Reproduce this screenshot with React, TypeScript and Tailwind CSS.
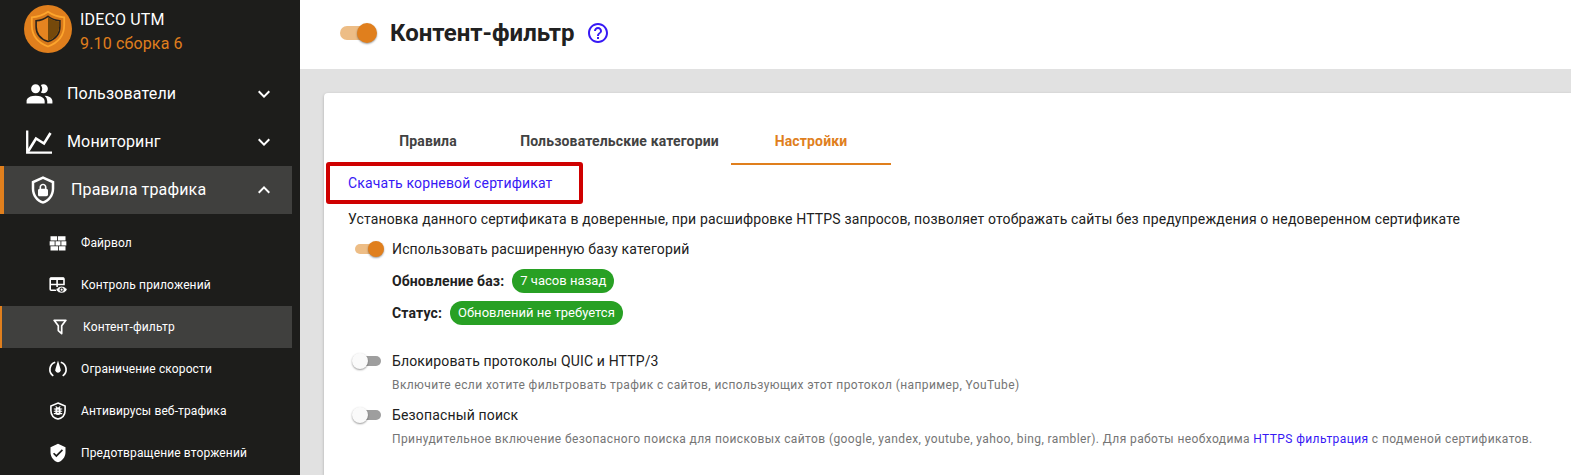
import React from "react";
import { MdVerifiedUser, MdHelpOutline, MdExpandMore, MdExpandLess } from "react-icons/md";

const People = () => (
  <svg viewBox="0 0 24 24" className="-ml-px h-[31px] w-[31px] shrink-0" fill="currentColor">
    <path d="M16 17V19H2V17S2 13 9 13 16 17 16 17M12.5 7.5A3.5 3.5 0 1 0 9 11A3.5 3.5 0 0 0 12.5 7.5M15.94 13A5.32 5.32 0 0 1 18 17V19H22V17S22 13.37 15.94 13M15 4A3.39 3.39 0 0 0 13.07 4.59A5 5 0 0 1 13.07 10.41A3.39 3.39 0 0 0 15 11A3.5 3.5 0 0 0 15 4Z" />
  </svg>
);

const ShieldLock = () => (
  <svg viewBox="0 0 24 24" className="h-[30px] w-[30px]" fill="currentColor">
    <path d="M21,11C21,16.55 17.16,21.74 12,23C6.84,21.74 3,16.55 3,11V5L12,1L21,5V11M12,21C15.75,20 19,15.54 19,11.22V6.3L12,3.18L5,6.3V11.22C5,15.54 8.25,20 12,21M14.8,11V9.5C14.8,8.1 13.4,7 12,7C10.6,7 9.2,8.1 9.2,9.5V11C8.6,11 8,11.6 8,12.2V15.7C8,16.4 8.6,17 9.2,17H14.7C15.4,17 16,16.4 16,15.8V12.3C16,11.6 15.4,11 14.8,11M13.5,11H10.5V9.5C10.5,8.7 11.2,8.2 12,8.2C12.8,8.2 13.5,8.7 13.5,9.5V11Z" />
  </svg>
);

const Chart = () => (
  <svg viewBox="0 0 26 24" className="ml-px h-6 w-[26px]" fill="none" stroke="currentColor" strokeWidth="2.3">
    <path d="M1.2 0.5V22.6H26" />
    <path d="M2 21.5L10 8.5L18 13.5L24.5 3" strokeWidth="2.6" />
  </svg>
);

const Wall = () => (
  <svg viewBox="0 0 24 24" className="h-5 w-5" fill="currentColor">
    <path d="M3,16H12V21H3V16M2,10H8V15H2V10M9,10H15V15H9V10M16,10H22V15H16V10M13,16H21V21H13V16M3,4H11V9H3V4M12,4H21V9H12V4Z" />
  </svg>
);

const TableEye = () => (
  <svg viewBox="0 0 20 20" className="h-5 w-5">
    <path d="M8.5 15.2H3.2a1 1 0 0 1-1-1V4a1 1 0 0 1 1-1H15a1 1 0 0 1 1 1V10.3M2.2 9.5H16M9.1 4V12" fill="none" stroke="currentColor" strokeWidth="1.6" />
    <path d="M2.2 2.6H16V5H2.2z" fill="currentColor" />
    <path d="M8 14.7C10.5 10 16.7 10 19.2 14.7C16.7 19.2 10.5 19.2 8 14.7Z" fill="currentColor" stroke="#1d1d1b" strokeWidth=".7" />
    <circle cx="13.6" cy="14.7" r="2.1" fill="#1d1d1b" />
    <circle cx="13.6" cy="14.7" r="1.1" fill="currentColor" />
  </svg>
);

const Funnel = () => (
  <svg viewBox="0 0 20 20" className="h-5 w-5" fill="none" stroke="currentColor" strokeWidth="1.7" strokeLinejoin="round">
    <path d="M4.1 3.3H15.9L11.7 8.7V16.6L8.3 13.6V8.7Z" />
  </svg>
);

const Gauge = () => (
  <svg viewBox="0 0 20 20" className="h-5 w-5" fill="none" stroke="currentColor" strokeWidth="1.7">
    <path d="M5.3 16.9A7.7 7.7 0 0 1 7.2 3.2M14.7 16.9A7.7 7.7 0 0 0 12.8 3.2" />
    <path d="M10 1.4L12.4 9.4A2.8 2.8 0 1 1 7.6 9.4Z" fill="currentColor" stroke="none" />
  </svg>
);

const ShieldBug = () => (
  <svg viewBox="0 0 20 20" className="h-5 w-5" fill="none" stroke="currentColor">
    <path d="M10 2L17.1 5V9.4C17.1 13.4 14.2 16.9 10 18.1C5.8 16.9 2.9 13.4 2.9 9.4V5Z" strokeWidth="1.6" />
    <rect x="7.4" y="6.3" width="5.2" height="7.8" rx="2.5" fill="currentColor" stroke="none" />
    <path d="M5.8 8H14.2M5.8 10.3H14.2M5.8 12.6H14.2M7.7 5.3L9 6.8M12.3 5.3L11 6.8" strokeWidth="1.1" />
    <path d="M9.2 9.1h1.6M9.2 11.4h1.6" stroke="#1d1d1b" strokeWidth=".8" />
  </svg>
);

const Logo = () => (
  <svg viewBox="0 0 48 48" className="h-12 w-12 shrink-0">
    <circle cx="24" cy="24" r="24" fill="#e07f1d" />
    <path d="M24 6.8C28.5 10 34 12 40.2 12.3V20C40.2 30.5 34.5 37.5 24 41.5C13.5 37.5 7.8 30.5 7.8 20V12.3C14 12 19.5 10 24 6.8Z" fill="#d6781b" stroke="#fda52c" strokeWidth="1.8" />
    <path d="M24 11.3C27.7 14 31.5 15.4 35.9 15.8V21.5C35.9 29 32 34 24 36.5C16 34 12.1 29 12.1 21.5V15.8C16.5 15.4 20.3 14 24 11.3Z" fill="#e58420" stroke="#28231c" strokeWidth="1.6" />
    <path d="M24 12.3C27.5 14.7 31 16 35.1 16.5V21.5C35.1 28.5 31.4 33.3 24 35.7Z" fill="#75490b" />
  </svg>
);

const main = [
  { icon: <People />, label: "Пользователи" },
  { icon: <Chart />, label: "Мониторинг" },
];

const subs = [
  { icon: <Wall />, label: "Файрвол" },
  { icon: <TableEye />, label: "Контроль приложений" },
  { icon: <Funnel />, label: "Контент-фильтр", active: true },
  { icon: <Gauge />, label: "Ограничение скорости" },
  { icon: <ShieldBug />, label: "Антивирусы веб-трафика" },
  { icon: <MdVerifiedUser className="h-5 w-5" />, label: "Предотвращение вторжений" },
];

function Toggle({ on }: { on?: boolean }) {
  return (
    <span className={"flex h-5 shrink-0 items-center " + (on ? "ml-[7px] mr-[9px] w-7" : "ml-2 mr-[11px] w-[25px]")}>
      <span className={"flex h-[10px] w-full items-center rounded-full " + (on ? "justify-end bg-[#edbd86]" : "bg-[#9e9e9e]")}>
        <span className={"h-4 w-4 shrink-0 rounded-full shadow-[0_1px_2px_rgba(0,0,0,0.4)] " + (on ? "-mr-px bg-[#e07f1d]" : "-ml-1 bg-[#fafafa]")} />
      </span>
    </span>
  );
}

export default function App() {
  return (
    <div className="flex h-[475px] w-[1571px] overflow-hidden bg-[#e1e1e1] font-[Roboto,sans-serif] text-[#212121]">
      <aside className="flex w-[300px] shrink-0 flex-col bg-[#1d1d1b] text-white">
        <div className="flex h-[69px] gap-2 pl-6 pt-[5px] text-base leading-6 tracking-[0.15px]">
          <Logo />
          <div className="pt-[3px]">
            <div>IDECO UTM</div>
            <div className="text-[#e07f1d]">9.10 сборка 6</div>
          </div>
        </div>
        <nav className="w-[292px]">
          {main.map((m) => (
            <div key={m.label} className="flex h-12 translate-y-px items-center pl-6 pr-4">
              <span className="flex w-[43px] items-center pl-px">{m.icon}</span>
              <span className="flex-1 text-base tracking-[0.15px]">{m.label}</span>
              <MdExpandMore className="h-6 w-6" />
            </div>
          ))}
          <div className="mt-px flex h-12 items-center border-l-4 border-[#e07f1d] bg-[#40403e] pl-6 pr-4">
            <span className="flex w-[43px] items-center">
              <ShieldLock />
            </span>
            <span className="flex-1 text-base tracking-[0.15px]">Правила трафика</span>
            <MdExpandLess className="h-6 w-6" />
          </div>
          <div className="pt-2">
            {subs.map((s) => (
              <div
                key={s.label}
                className={
                  "flex h-[42px] items-center gap-[13px] pl-12 text-xs tracking-[0.12px] " +
                  (s.active ? "border-l-2 border-[#e07f1d] bg-[#40403e]" : "")
                }
              >
                {s.icon}
                <span className="whitespace-nowrap">{s.label}</span>
              </div>
            ))}
          </div>
        </nav>
      </aside>

      <main className="flex min-w-0 flex-1 flex-col">
        <header className="flex h-[69px] shrink-0 items-center bg-white pb-[3px] pl-10">
          <span className="flex h-[14px] w-9 items-center justify-end rounded-full bg-[#edbd86]">
            <span className="-mr-px h-5 w-5 rounded-full bg-[#e07f1d] shadow-[0_1px_2px_rgba(0,0,0,0.4)]" />
          </span>
          <h1 className="ml-[14px] text-2xl font-bold">Контент-фильтр</h1>
          <MdHelpOutline className="ml-3 h-6 w-6 text-[#3719f5]" />
        </header>

        <section className="ml-6 mt-6 flex-1 whitespace-nowrap rounded-tl bg-white pl-6 pt-6 shadow-[0_1px_3px_rgba(0,0,0,0.25)]">
          <div className="flex h-12 text-sm font-bold leading-[48px] tracking-[0.15px] text-[#424242]">
            <div className="w-40 text-center">Правила</div>
            <div className="w-[223px] text-center">Пользовательские категории</div>
            <div className="w-40 border-b-2 border-[#e07f1d] text-center text-[#e07f1d]">Настройки</div>
          </div>
          <div className="relative flex h-9 items-center text-sm tracking-[0.15px] text-[#3719f5]">
            Скачать корневой сертификат
            <span className="absolute -left-[22px] -top-[3px] h-[42px] w-[257px] rounded-[3px] border-4 border-[#cf0000]" />
          </div>
          <div className="flex h-9 items-center text-sm tracking-[0.15px]">
            Установка данного сертификата в доверенные, при расшифровке HTTPS запросов, позволяет отображать сайты без
            предупреждения о недоверенном сертификате
          </div>
          <div className="flex h-6 items-center text-sm tracking-[0.15px]">
            <Toggle on />
            Использовать расширенную базу категорий
          </div>
          <div className="flex h-10 items-center gap-2 pl-11 text-sm font-bold tracking-[0.13px]">
            Обновление баз:
            <span className="flex h-6 items-center rounded-full bg-[#28a024] px-2 text-[13px] font-normal tracking-[0.03px] text-white">7 часов назад</span>
          </div>
          <div className="-mt-1 flex h-8 items-center gap-2 pl-11 text-sm font-bold tracking-[0.15px]">
            Статус:
            <span className="flex h-6 items-center rounded-full bg-[#28a024] px-2 text-[13px] font-normal tracking-[0.02px] text-white">Обновлений не требуется</span>
          </div>
          <div className="mt-5 flex h-6 items-center text-sm tracking-[0.15px]">
            <Toggle />
            Блокировать протоколы QUIC и HTTP/3
          </div>
          <div className="flex h-6 items-center pl-11 text-xs tracking-[0.4px] text-[#757575]">
            Включите если хотите фильтровать трафик с сайтов, использующих этот протокол (например, YouTube)
          </div>
          <div className="mt-[6px] flex h-6 items-center text-sm tracking-[0.15px]">
            <Toggle />
            Безопасный поиск
          </div>
          <div className="h-6 pl-11 text-xs leading-6 tracking-[0.396px] text-[#757575]">
            Принудительное включение безопасного поиска для поисковых сайтов (google, yandex, youtube, yahoo, bing, rambler). Для работы
            необходима <a className="text-[#3719f5]">HTTPS фильтрация</a> с подменой сертификатов.
          </div>
        </section>
      </main>
    </div>
  );
}
